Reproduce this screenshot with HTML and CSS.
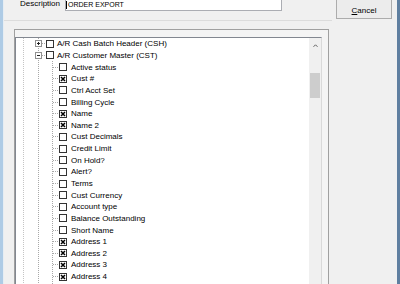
FILE: index.html
```html
<!DOCTYPE html>
<html>
  <head>
    <title>
      Order Export
    </title>
    <link rel="stylesheet" href="styles.css">
  </head>
  <body>
    <div class="window">
      <div class="main">
        <div class="top-row">
          <label class="field-label" for="description">Description</label>
          <div class="text-input" id="description"><span class="caret"></span>ORDER EXPORT</div>
        </div>
        <div class="sep"></div>
        <div class="panel">
          <div class="tree-box">
            <div class="tree">
              <div class="node l1"><span class="exp plus"></span><span class="tick"></span><span class="cb"></span><span class="label">A/R Cash Batch Header (CSH)</span></div>
              <div class="node l1"><span class="exp"></span><span class="tick"></span><span class="cb"></span><span class="label">A/R Customer Master (CST)</span></div>
              <div class="children">
                <div class="node l2"><span class="tick"></span><span class="cb"></span><span class="label">Active status</span></div>
                <div class="node l2"><span class="tick"></span><span class="cb"><svg viewBox="0 0 6 6"><path d="M1 1L5 5M5 1L1 5"/></svg></span><span class="label">Cust #</span></div>
                <div class="node l2"><span class="tick"></span><span class="cb"></span><span class="label">Ctrl Acct Set</span></div>
                <div class="node l2"><span class="tick"></span><span class="cb"></span><span class="label">Billing Cycle</span></div>
                <div class="node l2"><span class="tick"></span><span class="cb"><svg viewBox="0 0 6 6"><path d="M1 1L5 5M5 1L1 5"/></svg></span><span class="label">Name</span></div>
                <div class="node l2"><span class="tick"></span><span class="cb"><svg viewBox="0 0 6 6"><path d="M1 1L5 5M5 1L1 5"/></svg></span><span class="label">Name 2</span></div>
                <div class="node l2"><span class="tick"></span><span class="cb"></span><span class="label">Cust Decimals</span></div>
                <div class="node l2"><span class="tick"></span><span class="cb"></span><span class="label">Credit Limit</span></div>
                <div class="node l2"><span class="tick"></span><span class="cb"></span><span class="label">On Hold?</span></div>
                <div class="node l2"><span class="tick"></span><span class="cb"></span><span class="label">Alert?</span></div>
                <div class="node l2"><span class="tick"></span><span class="cb"></span><span class="label">Terms</span></div>
                <div class="node l2"><span class="tick"></span><span class="cb"></span><span class="label">Cust Currency</span></div>
                <div class="node l2"><span class="tick"></span><span class="cb"></span><span class="label">Account type</span></div>
                <div class="node l2"><span class="tick"></span><span class="cb"></span><span class="label">Balance Outstanding</span></div>
                <div class="node l2"><span class="tick"></span><span class="cb"></span><span class="label">Short Name</span></div>
                <div class="node l2"><span class="tick"></span><span class="cb"><svg viewBox="0 0 6 6"><path d="M1 1L5 5M5 1L1 5"/></svg></span><span class="label">Address 1</span></div>
                <div class="node l2"><span class="tick"></span><span class="cb"><svg viewBox="0 0 6 6"><path d="M1 1L5 5M5 1L1 5"/></svg></span><span class="label">Address 2</span></div>
                <div class="node l2"><span class="tick"></span><span class="cb"><svg viewBox="0 0 6 6"><path d="M1 1L5 5M5 1L1 5"/></svg></span><span class="label">Address 3</span></div>
                <div class="node l2"><span class="tick"></span><span class="cb"><svg viewBox="0 0 6 6"><path d="M1 1L5 5M5 1L1 5"/></svg></span><span class="label">Address 4</span></div>
              </div>
            </div>
            <div class="scrollbar">
              <div class="arrow-up"><svg viewBox="0 0 5 3"><path d="M0.5 2.8L2.5 0.8L4.5 2.8"/></svg></div>
              <div class="thumb"></div>
            </div>
          </div>
        </div>
      </div>
      <div class="side">
        <button class="btn" type="button"><u>C</u>ancel</button>
      </div>
    </div>
  </body>
</html>
```
FILE: styles.css
```css
html, body {
  margin: 0;
  padding: 0;
}

body {
  width: 400px;
  height: 284px;
  overflow: hidden;
  background-color: #f0f0f0;
  font-family: "Liberation Sans", Arial, sans-serif;
  font-size: 8px;
  color: #000;
}

.window {
  display: flex;
  width: 400px;
  height: 284px;
  box-sizing: border-box;
  border-left: 3px solid #aecbe5;
  border-right: 3px solid #5f7fa0;
}

.main {
  display: flex;
  flex-direction: column;
  width: 329px;
  flex: none;
  border-left: 1px solid #e6edf3;
  box-sizing: border-box;
}

.top-row {
  display: flex;
  flex: none;
  height: 20px;
  padding-left: 16px;
}

.field-label {
  width: 45px;
  line-height: 10px;
  margin-top: -1px;
}

.text-input {
  width: 217px;
  height: 12px;
  box-sizing: border-box;
  border: 1px solid #abadb3;
  border-top: none;
  background-color: #fff;
  font-size: 7px;
  line-height: 9px;
  display: flex;
  align-items: center;
  margin-top: -1px;
}

.caret {
  width: 1px;
  height: 8px;
  background-color: #000;
  margin-right: 1px;
}

.sep {
  flex: none;
  height: 1px;
  background-color: #dcdcdc;
  margin-bottom: 8px;
}

.panel {
  flex: 1;
  min-height: 0;
  overflow: hidden;
  margin-left: 10px;
  width: 315px;
  box-sizing: border-box;
  border: 1px solid #a0a0a0;
  border-bottom: none;
  background-color: #f4f4f4;
  padding-top: 7px;
  display: flex;
  flex-direction: column;
}

.tree-box {
  flex: 1;
  min-height: 0;
  display: flex;
  width: 307px;
  box-sizing: border-box;
  border-top: 1px solid #828790;
  border-left: 1px solid #828790;
  border-right: 1px solid #d9d9d9;
}

.tree {
  flex: 1;
  overflow: hidden;
  background-color: #fff;
  background-image:
    linear-gradient(#c4c4c4 50%, transparent 50%),
    linear-gradient(#a8a8a8 50%, transparent 50%);
  background-size: 1px 2px, 1px 2px;
  background-repeat: repeat-y, repeat-y;
  background-position: 7px 0, 22px 0;
}

.children {
  background-image: linear-gradient(#a8a8a8 50%, transparent 50%);
  background-size: 1px 2px;
  background-repeat: repeat-y;
  background-position: 36px 0;
  padding-bottom: 4px;
}

.node {
  height: 11.65px;
  flex: none;
  display: flex;
  align-items: center;
  white-space: nowrap;
}

.l1 {
  padding-left: 19px;
}

.l2 {
  padding-left: 37px;
}

.exp {
  position: relative;
  width: 7px;
  height: 7px;
  box-sizing: border-box;
  border: 1px solid #919191;
  background-color: #fff;
  flex: none;
}

.exp::before {
  content: "";
  position: absolute;
  left: 1px;
  top: 2px;
  width: 3px;
  height: 1px;
  background-color: #222;
}

.exp.plus::after {
  content: "";
  position: absolute;
  left: 2px;
  top: 1px;
  width: 1px;
  height: 3px;
  background-color: #222;
}

.tick {
  width: 4px;
  height: 1px;
  flex: none;
  background-image: linear-gradient(90deg, #a8a8a8 50%, transparent 50%);
  background-size: 2px 1px;
}

.l2 .tick {
  width: 6px;
}

.cb {
  width: 8px;
  height: 8px;
  box-sizing: border-box;
  border: 1px solid #333;
  background-color: #fff;
  flex: none;
  display: flex;
}

.cb svg {
  width: 6px;
  height: 6px;
}

.cb path {
  stroke: #000;
  stroke-width: 1.5;
  fill: none;
}

.label {
  margin-left: 3px;
}

.l2 .label {
  margin-left: 4px;
}

.scrollbar {
  width: 12px;
  flex: none;
  background-color: #f0f0f0;
  display: flex;
  flex-direction: column;
  align-items: center;
}

.arrow-up {
  height: 14px;
  flex: none;
  display: flex;
  align-items: center;
  justify-content: center;
}

.arrow-up svg {
  width: 5px;
  height: 3px;
}

.arrow-up path {
  stroke: #606060;
  stroke-width: 1;
  fill: none;
}

.thumb {
  flex: none;
  width: 10px;
  height: 25px;
  margin-top: 21px;
  background-color: #cdcdcd;
}

.side {
  flex: 1;
}

.btn {
  display: block;
  width: 56px;
  height: 23px;
  margin-top: -4px;
  margin-left: 4px;
  padding: 7px 0 0 0;
  border: 1px solid #acacac;
  background-color: #ececec;
  font-family: "Liberation Sans", Arial, sans-serif;
  font-size: 8px;
  line-height: 14px;
  color: #000;
  text-align: center;
}
```
